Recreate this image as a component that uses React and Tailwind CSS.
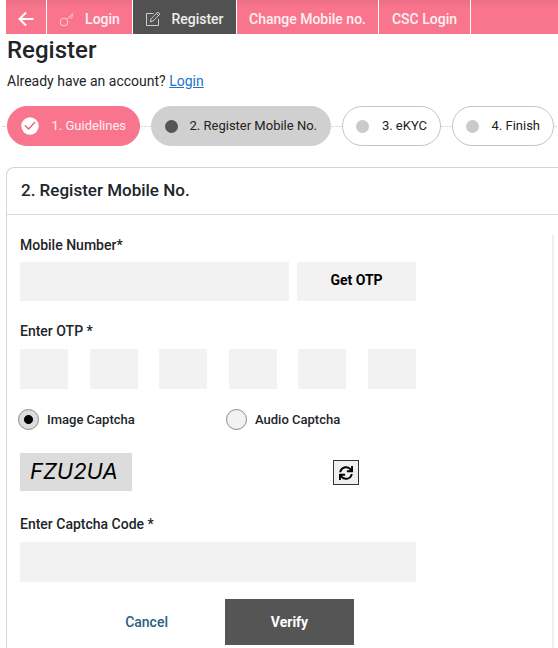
import React, { useState } from 'react';
import { FaSync } from 'react-icons/fa';

const steps = [
  { label: '1. Guidelines', state: 'done', width: 'w-[133px]' },
  { label: '2. Register Mobile No.', state: 'current', width: 'w-[180px]' },
  { label: '3. eKYC', state: 'todo', width: 'w-[99px]' },
  { label: '4. Finish', state: 'todo', width: 'w-[102px]' },
];

const pillStyles = {
  done: 'bg-[#f9748d] border-[#f9748d] text-white/90 px-[13px]',
  current: 'bg-[#d0d0d0] border-[#d0d0d0] text-[#222] px-[13px]',
  todo: 'bg-white border-[#c4c4c4] text-[#222] px-[13px]',
};

const BackIcon = () => (
  <svg className="w-4 h-4" viewBox="0 0 16 16" fill="none" stroke="currentColor" strokeWidth="2">
    <path d="M15.5 8H1.5M8 1.5 1.5 8 8 14.5" />
  </svg>
);

const KeyIcon = () => (
  <svg className="w-4 h-4 opacity-70" viewBox="0 0 16 16" fill="none" stroke="currentColor" strokeWidth="1">
    <circle cx="5" cy="11" r="3.8" />
    <path d="M7.7 8.3 14.5 2M10.5 5.7l1.8 1.8 1.3-1.2-1.1-1.1 1.7-1.5" />
  </svg>
);

const EditIcon = () => (
  <svg className="w-4 h-4 opacity-80" viewBox="0 0 16 16" fill="none" stroke="currentColor" strokeWidth="1">
    <path d="M8.5 2.5H1.5v12h12V8" />
    <path d="M5.3 10.8l.8-3L12.8 1l2.1 2.1-6.7 6.8zM11.4 2.4l2.1 2.1" />
  </svg>
);

const StepDot = ({ state }) => {
  if (state === 'done') {
    return (
      <svg className="w-[18px] h-[18px]" viewBox="0 0 18 18" fill="none">
        <circle cx="9" cy="9" r="8.7" fill="#fff" />
        <path d="M3.8 8.2 7.6 12 14 5" stroke="#e5657f" strokeWidth="1.4" />
      </svg>
    );
  }
  return (
    <span
      className={`w-[13px] h-[13px] rounded-full ${state === 'current' ? 'bg-[#555]' : 'bg-[#cacaca]'}`}
    ></span>
  );
};

const Steps = () => (
  <ol className="flex items-center mt-4 whitespace-nowrap text-[13px] leading-5">
    <li className="w-[7px] shrink-0 pl-0.5" aria-hidden="true">
      <div className="w-1 border-t border-dashed border-[#ddd]"></div>
    </li>
    {steps.map((step) => (
      <React.Fragment key={step.label}>
        <li
          className={`flex items-center justify-between shrink-0 h-10 rounded-full border ${step.width} ${pillStyles[step.state]}`}
        >
          <StepDot state={step.state} />
          <span>{step.label}</span>
        </li>
        <li className="w-[11px] shrink-0 border-t border-dashed border-[#ddd]" aria-hidden="true"></li>
      </React.Fragment>
    ))}
  </ol>
);

const CaptchaOption = ({ id, label, checked, onChange }) => (
  <div className="flex items-center gap-2">
    <input
      type="radio"
      id={id}
      name="captchaType"
      checked={checked}
      onChange={onChange}
      className="appearance-none w-[21px] h-[21px] rounded-full border border-[#888] bg-[#f2f2f2] checked:bg-[radial-gradient(circle,#000_4px,#dcdcdc_5px)]"
    />
    <label htmlFor={id}>{label}</label>
  </div>
);

const App = () => {
  const [captchaType, setCaptchaType] = useState('image');

  return (
    <div className="min-h-screen flex flex-col overflow-hidden bg-white font-['Roboto',sans-serif] text-sm text-[#212529]">
      {/* Top navigation */}
      <nav className="ml-1.5 h-[34px] shrink-0 flex whitespace-nowrap font-medium text-white/90 bg-linear-to-b from-[#ec6f87] to-[#f9748d] to-25%">
        <a href="#back" aria-label="Back" className="w-[41px] pt-1 flex items-center justify-center text-white border-r border-white">
          <BackIcon />
        </a>
        <a href="#login" className="w-[86px] pt-1 flex items-center justify-center gap-2.5 border-r border-white">
          <KeyIcon />
          Login
        </a>
        <a href="#register" className="w-[104px] pt-1 flex items-center justify-center gap-2.5 bg-[#515151] border-r border-white">
          <EditIcon />
          Register
        </a>
        <a href="#change" className="w-[142px] pt-1 flex items-center justify-center border-r border-white">
          Change Mobile no.
        </a>
        <a href="#csc" className="w-[92px] pt-1 flex items-center justify-center border-r border-white">
          CSC Login
        </a>
      </nav>

      {/* Page heading */}
      <header className="pl-[7px]">
        <h1 className="text-2xl leading-8 font-medium">Register</h1>
        <p className="mt-1.5 leading-[18px]">
          Already have an account?{' '}
          <a href="#login" className="text-[#1976c5] underline">
            Login
          </a>
        </p>
      </header>

      <Steps />

      {/* Registration panel */}
      <section className="ml-1.5 mt-[21px] flex-1 flex flex-col border-t border-l border-[#d4d4d4] rounded-tl-lg">
        <h2 className="h-[47px] pl-3.5 pb-0.5 flex items-center text-[17px] font-medium border-b border-[#dcdcdc]">
          2. Register Mobile No.
        </h2>
        <div className="flex-1 flex pt-5 pl-[13px] pr-1">
          <form className="flex-1 border-r-2 border-[#eee] font-medium" onSubmit={(e) => e.preventDefault()}>
            <div className="w-full max-w-[396px]">
              <label htmlFor="mobile" className="block leading-5">
                Mobile Number*
              </label>
              <div className="flex gap-2 mt-[7px]">
                <input id="mobile" type="tel" className="flex-1 min-w-0 h-[39px] px-3 bg-[#f2f2f2]" />
                <button type="button" className="w-[119px] h-[39px] pb-1 bg-[#f2f2f2] text-black font-bold">
                  Get OTP
                </button>
              </div>

              <fieldset className="mt-5">
                <legend className="leading-5">Enter OTP *</legend>
                <div className="flex justify-between mt-2">
                  {[1, 2, 3, 4, 5, 6].map((n) => (
                    <input
                      key={n}
                      type="text"
                      maxLength={1}
                      aria-label={`OTP digit ${n}`}
                      className="w-12 h-10 text-center bg-[#f2f2f2]"
                    />
                  ))}
                </div>
              </fieldset>

              <div className="-ml-0.5 mt-5 grid grid-cols-[208px_1fr] text-[13px] leading-5">
                <CaptchaOption
                  id="imageCaptcha"
                  label="Image Captcha"
                  checked={captchaType === 'image'}
                  onChange={() => setCaptchaType('image')}
                />
                <CaptchaOption
                  id="audioCaptcha"
                  label="Audio Captcha"
                  checked={captchaType === 'audio'}
                  onChange={() => setCaptchaType('audio')}
                />
              </div>

              <div className="mt-[23px] flex items-end gap-[201px]">
                <div className="w-28 h-[38px] pl-2.5 bg-[#dcdcdc] text-black font-['Inter',sans-serif] font-normal italic text-[22px] leading-[36px]">
                  FZU2UA
                </div>
                <button
                  type="button"
                  aria-label="Refresh captcha"
                  className="w-[26px] h-[25px] mb-1.5 flex items-center justify-center border border-[#333] bg-[#efefef] text-black"
                >
                  <FaSync className="w-3.5 h-3.5" />
                </button>
              </div>

              <label htmlFor="captcha" className="block mt-[23px] leading-5">
                Enter Captcha Code *
              </label>
              <input id="captcha" type="text" className="block mt-2 w-full h-10 px-3 bg-[#f2f2f2]" />

              <div className="mt-[17px] mr-[62px] flex justify-end items-center gap-[57px]">
                <button type="button" className="text-[#2a6083]">
                  Cancel
                </button>
                <button type="submit" className="w-[129px] h-[46px] bg-[#555] text-white font-bold">
                  Verify
                </button>
              </div>
            </div>
          </form>
        </div>
      </section>
    </div>
  );
};

export default App;
